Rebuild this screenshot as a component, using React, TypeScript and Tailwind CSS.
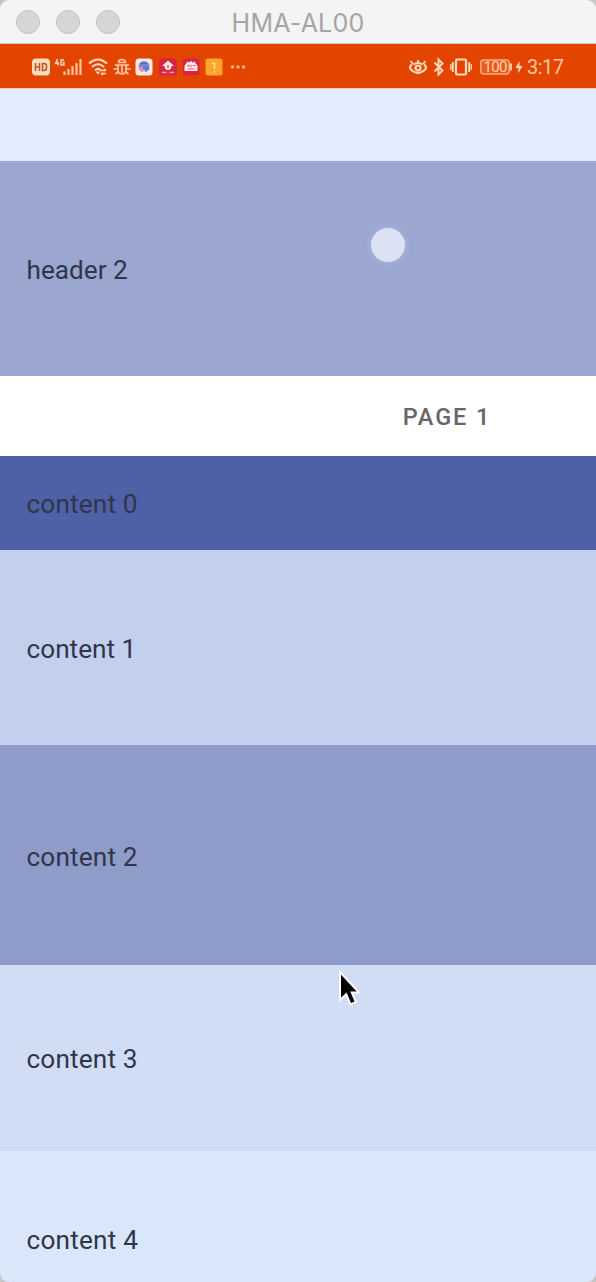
import type { ReactNode } from "react";

const ink = "#ffdcbe";

function Icon({ w, className, children }: { w: number; className: string; children: ReactNode }) {
  return (
    <svg
      width={w}
      height={20}
      viewBox={`0 0 ${w} 20`}
      fill="none"
      stroke={ink}
      strokeWidth={1.6}
      className={`block shrink-0 ${className}`}
    >
      {children}
    </svg>
  );
}

function StatusIcons() {
  return (
    <div className="flex items-center pt-px">
      <Icon w={18} className="">
        <rect x="0" y="1.5" width="18" height="17" rx="4" fill={ink} stroke="none" />
        <path d="M3.5 6v8M7.5 6v8M3.5 10h4M10.5 6.5v7h1.5q2.5 0 2.5-2.5V9q0-2.5-2.5-2.5z" stroke="#b8592b" />
      </Icon>
      <Icon w={29} className="ml-[4px]">
        <path d="M3.5 2L1.5 6.5h3.5M4 4.500v4M10 3H7v5h3V5.500H8.500" strokeWidth={1.4} />
        <path d="M10.5 14.5v3.5M14.5 12v6M18.5 9v9M22.5 6v12M26.5 2v16" strokeWidth={2.2} stroke="#ffc59b" />
      </Icon>
      <Icon w={20} className="ml-[5px]">
        <path d="M1 6.5Q10-1.5 19 6.5M4 10Q10 4.5 16 10M7 13.2q3-2.6 6 0" strokeWidth={2.1} />
        <path d="M7.5 14.5h5L10 17.5z" fill={ink} stroke="none" />
        <path d="M13 13.5h5M16 12l2 1.5M18 16.5h-5M15 18l-2-1.5" strokeWidth={1.4} />
      </Icon>
      <Icon w={18} className="ml-[5px]">
        <path d="M5.5 5.5q0-3 3.5-3t3.5 3zM5 8h8v4.5q0 4.5-4 4.5t-4-4.5zM9 8v9M5 9L2 7.500M13 9l3-1.500M5 12H0.500M13 12h4.500M5.500 14.500L2.500 17M12.500 14.500l3 2.500" stroke="#ffc79f" strokeWidth={1.7} />
      </Icon>
      <Icon w={18} className="ml-[4px]">
        <rect x="0.5" y="1.5" width="17" height="17" rx="3.5" fill="#fbe8e6" stroke="none" />
        <circle cx="9" cy="9.5" r="5.5" fill="#7d8bd0" stroke="none" />
        <path d="M4 10q0 5 5 5l1-3-3-2z" fill="#eb87c5" stroke="none" />
        <path d="M9 15q4 0 5.500-4L11 8.500 8 10z" fill="#4f7fe0" stroke="none" />
        <path d="M7 15h4l-2-3z" fill="#f5ca54" stroke="none" />
        <path d="M5.500 6.500h6" stroke="#5764ad" strokeWidth={1.4} />
      </Icon>
      <Icon w={18} className="ml-[6px]">
        <rect x="0" y="1.5" width="18" height="17" rx="3.5" fill="#d72645" stroke="none" />
        <path d="M9 3.500l6 5.500h-2.500q0 4-3.500 4T5.500 9H3z" fill="#ffe4df" stroke="none" />
        <path d="M9 8v3" stroke="#e8808a" strokeWidth={2} />
        <path d="M3 15.500h4M8.500 15.500h1M11 15.500h4" stroke="#f3a5aa" />
      </Icon>
      <Icon w={18} className="ml-[5px]">
        <rect x="0.5" y="1.5" width="17" height="17" rx="3.5" fill="#d72645" stroke="none" />
        <path d="M2.500 9L5.500 4.500 7 5.500 9 4l2 1.500 1.500-1L15.500 9v5h-13z" fill="#ffe9e4" stroke="none" />
        <path d="M5 9l2-1v2M9 7.500v3M11 8.500h2.500M5.500 12h7" stroke="#dc6576" strokeWidth={1} />
      </Icon>
      <Icon w={18} className="ml-[5px]">
        <rect x="0.5" y="1.5" width="17" height="17" rx="2.5" fill="#ffa52b" stroke="none" />
        <path d="M7 6.500h3M9.500 6v6M9.500 14v1.500" stroke="#ffe19b" />
      </Icon>
      <Icon w={16} className="ml-[7px]">
        <circle cx="2.5" cy="10" r="1.7" fill="#ffb385" stroke="none" />
        <circle cx="8" cy="10" r="1.7" fill="#ffb385" stroke="none" />
        <circle cx="13.5" cy="10" r="1.7" fill="#ffb385" stroke="none" />
      </Icon>
    </div>
  );
}

function SystemIcons() {
  return (
    <div className="flex items-center pt-px">
      <Icon w={18} className="">
        <path d="M3 7.500Q-1 10.500 3 13.500Q9 18.500 15 13.500Q19 10.500 15 7.500" strokeWidth={2.2} />
        <path d="M4.500 7.500Q9 4.500 13.500 7.500" strokeWidth={1.8} />
        <circle cx="9" cy="11" r="2.5" strokeWidth={2.2} />
        <path d="M9 5.500V3M4 7L1.500 4M14 7L16.500 4" strokeWidth={1.8} />
      </Icon>
      <Icon w={11} className="ml-[6px]">
        <path d="M1.500 5.500l8 8-4 4V2.500l4 4-8 8" strokeWidth={1.9} />
      </Icon>
      <Icon w={22} className="ml-[6px]">
        <rect x="6" y="2.5" width="10" height="15" rx="1" strokeWidth={2.2} />
        <path d="M2.800 5v10M19.200 5v10" strokeWidth={1.8} />
        <path d="M0.800 7v6M21.200 7v6" strokeWidth={1.3} />
      </Icon>
      <Icon w={33} className="ml-[8px]">
        <rect x="0.8" y="3" width="28.5" height="14" rx="3" stroke="#ffad7c" strokeWidth={1.5} fill="#e95a1c" />
        <path d="M31 6.500v7" strokeWidth={2} stroke="#ffc59b" />
        <text x="3.5" y="15.3" fontFamily="Roboto, sans-serif" fontSize="15" textLength="24" fill="#ffd3b3" stroke="none">100</text>
      </Icon>
      <Icon w={8} className="ml-[2px]">
        <path d="M4.500 4L0.500 11h3L3 16.500l4.500-7.500h-3z" fill={ink} stroke="none" />
      </Icon>
      <span className="ml-[4px] w-[37px] whitespace-nowrap text-[20px] leading-[22px] tracking-[-0.5px] text-[#ffc8a2]">3:17</span>
    </div>
  );
}

function Row({ label, className }: { label: string; className: string }) {
  return (
    <div className={`flex shrink-0 items-center pl-[26.5px] text-[26.2px] text-[#30364a] ${className}`}>
      <span className="leading-[26px]">{label}</span>
    </div>
  );
}

export default function App() {
  return (
    <div className="relative h-[1282px] w-[596px] overflow-hidden bg-[#c5c5c5] font-['Roboto',sans-serif]">
      <div className="flex h-full flex-col overflow-hidden rounded-[9px]">
        <header className="grid h-[44px] shrink-0 grid-cols-[1fr_auto_1fr] items-center border-b border-[#cbcbcb] bg-[#f4f4f4]">
          <div className="flex gap-4 pl-4">
            <span className="size-6 rounded-full border border-[#c2c2c2] bg-[#d6d6d6]" />
            <span className="size-6 rounded-full border border-[#c2c2c2] bg-[#d6d6d6]" />
            <span className="size-6 rounded-full border border-[#c2c2c2] bg-[#d6d6d6]" />
          </div>
          <h1 className="pt-[3px] font-['Inter',sans-serif] text-[25px] leading-8 tracking-[0.2px] text-[#a5a5a5]">HMA-AL00</h1>
          <div />
        </header>
        <div className="flex h-[44px] shrink-0 items-center justify-between bg-[#e34500] pl-[32px] pr-[32px] pt-px">
          <StatusIcons />
          <SystemIcons />
        </div>
        <div className="h-[73px] shrink-0 border-t border-[#f3c7b2] bg-[#e1ecfe]" />
        <Row label="header 2" className="h-[215px] bg-[#9ba6d1] pt-[3px]" />
        <div className="grid h-[80px] shrink-0 grid-cols-2 items-center bg-white">
          <div />
          <div className="pt-[3px] text-center text-[23.5px] font-medium leading-none tracking-[1.9px] text-[#66666b]">PAGE 1</div>
        </div>
        <Row label="content 0" className="h-[94px] bg-[#4e60a6] pt-[2px] tracking-[0.15px]" />
        <Row label="content 1" className="h-[195px] bg-[#c3d0ed] pt-[3px]" />
        <Row label="content 2" className="h-[220px] bg-[#8f9bc9] pt-[4px] tracking-[0.15px]" />
        <Row label="content 3" className="h-[186px] bg-[#d1ddf5] pt-[2px] tracking-[0.15px]" />
        <Row label="content 4" className="h-[177px] bg-[#dae6fa] tracking-[0.2px]" />
      </div>
      <div className="absolute left-[371px] top-[228px] size-[34px] rounded-full bg-[#dce2f3] shadow-[0_0_5px_3px_#a4afd9]" />
      <svg className="absolute left-[336px] top-[968px]" width="28" height="42" viewBox="0 0 28 42">
        <path d="M4 4v28l6.200-5.700 4.300 10.200 5.500-2.500-4.300-9.500H23z" fill="#000" stroke="#fff" strokeWidth="2" />
      </svg>
    </div>
  );
}
